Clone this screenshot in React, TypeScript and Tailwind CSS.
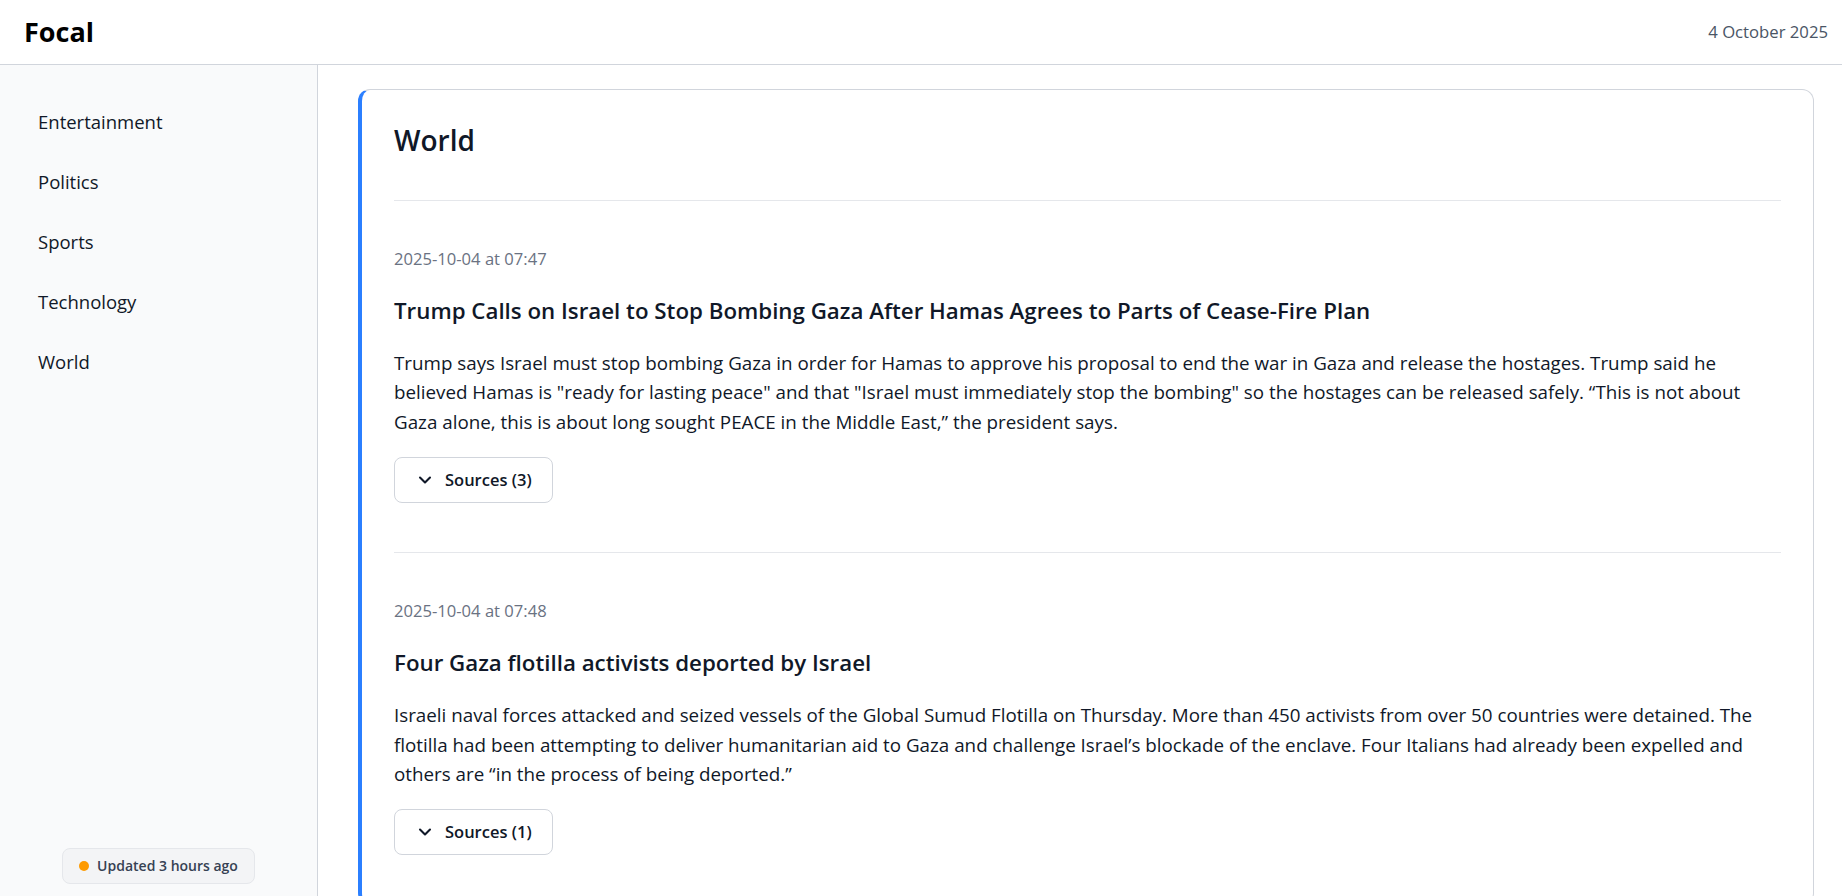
import { ChevronDown } from "lucide-react";

type Story = {
  id: string;
  time: string;
  title: string;
  summary: string;
  sources: number;
};

const categories = ["Entertainment", "Politics", "Sports", "Technology", "World"];

const stories: Story[] = [
  {
    id: "gaza-ceasefire",
    time: "2025-10-04 at 07:47",
    title: "Trump Calls on Israel to Stop Bombing Gaza After Hamas Agrees to Parts of Cease-Fire Plan",
    summary:
      'Trump says Israel must stop bombing Gaza in order for Hamas to approve his proposal to end the war in Gaza and release the hostages. Trump said he believed Hamas is "ready for lasting peace" and that "Israel must immediately stop the bombing" so the hostages can be released safely. \u201cThis is not about Gaza alone, this is about long sought PEACE in the Middle East,\u201d the president says.',
    sources: 3,
  },
  {
    id: "flotilla",
    time: "2025-10-04 at 07:48",
    title: "Four Gaza flotilla activists deported by Israel",
    summary:
      "Israeli naval forces attacked and seized vessels of the Global Sumud Flotilla on Thursday. More than 450 activists from over 50 countries were detained. The flotilla had been attempting to deliver humanitarian aid to Gaza and challenge Israel\u2019s blockade of the enclave. Four Italians had already been expelled and others are \u201cin the process of being deported.\u201d",
    sources: 1,
  },
];

function StoryItem({ story }: { story: Story }) {
  return (
    <article className="border-t border-gray-200 pt-[46px] pb-[49px]">
      <p className="text-[16.6px] leading-6 text-gray-500">{story.time}</p>
      <h3 className="mt-6 text-[22.3px] font-semibold leading-8 text-gray-900">{story.title}</h3>
      <p className="mt-[22px] text-[18.8px] leading-[29.4px] text-gray-900">{story.summary}</p>
      <button className="mt-5 flex items-center gap-2.5 rounded-lg border border-gray-300 bg-white px-5 py-2.5 text-[16.5px] font-semibold leading-6 text-gray-900">
        <ChevronDown className="size-5" strokeWidth={2.5} />
        Sources ({story.sources})
      </button>
    </article>
  );
}

export default function App() {
  return (
    <div className="flex h-screen flex-col bg-white font-['Open_Sans',sans-serif] text-gray-900">
      <header className="flex h-[65px] shrink-0 items-center justify-between border-b border-gray-300 pl-6 pr-[14px]">
        <h1 className="text-[27px] font-bold text-black">Focal</h1>
        <span className="text-[16.7px] text-gray-600">4 October 2025</span>
      </header>

      <div className="flex min-h-0 flex-1">
        {/* Category nav */}
        <aside className="flex w-[318px] shrink-0 flex-col justify-between border-r border-gray-300 bg-gray-50">
          <nav className="flex flex-col px-4 pt-[27px]">
            {categories.map((c) => (
              <a key={c} className="rounded-lg px-[22px] py-4 text-[18.5px] leading-7 text-gray-900">
                {c}
              </a>
            ))}
          </nav>
          <div className="flex justify-center pb-3">
            <div className="flex items-center gap-2 rounded-lg border border-gray-200 bg-gray-100 px-4 py-[7px] text-[14px] font-semibold leading-5 text-gray-700">
              <span className="size-2.5 rounded-full bg-amber-500" />
              Updated 3 hours ago
            </div>
          </div>
        </aside>

        <main className="min-w-0 flex-1 overflow-hidden pl-10 pr-[28px] pt-6">
          <section className="rounded-xl border border-l-4 border-gray-300 border-l-blue-500 bg-white px-8 pt-8">
            <h2 className="pb-[42px] text-[28px] font-semibold leading-9 text-gray-900">World</h2>
            {stories.map((s) => (
              <StoryItem key={s.id} story={s} />
            ))}
          </section>
        </main>
      </div>
    </div>
  );
}
